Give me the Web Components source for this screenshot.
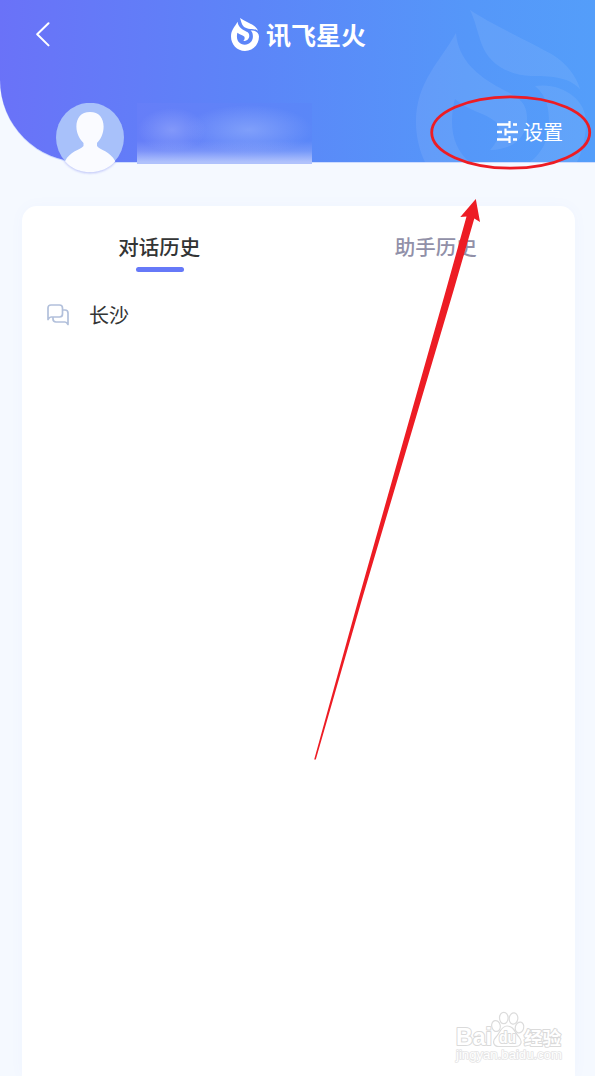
<!DOCTYPE html>
<html lang="zh-CN">
<head>
<meta charset="UTF-8">
<title>讯飞星火</title>
<style>
    html, body {
        margin: 0;
        height: 100%;
    }
    body {
        font-family: "Noto Sans CJK SC", sans-serif;
        background-color: #f5f9ff;
        overflow: hidden;
    }
</style>
</head>
<body>
<spark-app></spark-app>
<script>
class SparkFlame extends HTMLElement {
    connectedCallback() {
        this.attachShadow({ mode: 'open' });
        this.shadowRoot.innerHTML = `
            <style>
                :host {
                    display: block;
                    color: #ffffff;
                }
                svg {
                    display: block;
                    width: 100%;
                    height: 100%;
                }
            </style>
            <svg viewBox="416 10 170 200" preserveAspectRatio="none" fill="currentColor">
                <path d="M470 10C489 23 532 43 553 55C567 64 576 76 580 89C569 78 556 76 532 76C503 75 488 60 482 45C477 31 475 20 470 10Z"/>
                <path d="M456 33C440 62 416 82 416 122C416 170 452 210 501 210C550 210 586 170 586 122C586 98 560 82 535 86C547 96 549 108 549 124C549 150 528 172 500 172C470 172 452 150 452 122C452 112 453 106 455 99C470 112 484 112 496 122C502 130 498 142 490 150C512 150 527 138 527 118C527 100 515 96 500 88C478 76 458 60 456 33Z"/>
            </svg>
        `;
    }
}

class UserAvatar extends HTMLElement {
    connectedCallback() {
        this.attachShadow({ mode: 'open' });
        this.shadowRoot.innerHTML = `
            <style>
                :host {
                    display: block;
                    width: 68px;
                    height: 70px;
                }
                svg {
                    display: block;
                    filter: drop-shadow(0 1px 1px rgba(110, 120, 240, 0.4));
                }
            </style>
            <svg width="68" height="70" viewBox="0 0 68 70">
                <ellipse cx="34" cy="34.5" rx="34" ry="34.7" fill="#a8c1fa"/>
                <path d="M34 9C43 9 47.600 15 47.600 23.500C47.600 31 44.500 36.500 41 40V43C44 47 54 48 59.300 58.300C53 65.500 44 69.200 34 69.200C24 69.200 15 65.500 9 58.300C14 48 24 47 27.500 43V40C24 36.500 20.400 31 20.400 23.500C20.400 15 25 9 34 9Z" fill="#fafbff"/>
            </svg>
        `;
    }
}

class AppHeader extends HTMLElement {
    connectedCallback() {
        this.attachShadow({ mode: 'open' });
        this.shadowRoot.innerHTML = `
            <style>
                :host {
                    display: block;
                    position: relative;
                    height: 162px;
                }
                .backdrop {
                    position: absolute;
                    inset: 0;
                    overflow: hidden;
                    border-bottom-left-radius: 82px;
                    background: linear-gradient(92deg, #6a72f8 0%, #5c85f8 42%, #5597f9 78%, #549efa 100%);
                    box-shadow: 0 1px 0 #cddcff;
                }
                .backdrop spark-flame {
                    position: absolute;
                    left: 416px;
                    top: 10px;
                    width: 170px;
                    height: 200px;
                    opacity: 0.075;
                }
                .content {
                    position: relative;
                    color: #ffffff;
                }
                .bar {
                    display: grid;
                    grid-template-columns: 1fr auto 1fr;
                    align-items: center;
                    height: 69px;
                }
                .back {
                    margin-left: 35px;
                }
                .back svg, .settings svg {
                    display: block;
                }
                .brand {
                    display: flex;
                    align-items: center;
                    gap: 7px;
                    padding-left: 2px;
                    font-size: 25px;
                    font-weight: 700;
                    line-height: 34px;
                }
                .brand spark-flame {
                    width: 28px;
                    height: 33px;
                }
                .brand span {
                    margin-top: -1px;
                }
                .user {
                    display: flex;
                    padding: 34px 32px 0 56px;
                }
                .name {
                    width: 175px;
                    height: 61px;
                    margin-left: 13px;
                    background:
                        linear-gradient(to bottom, rgba(176, 192, 252, 0) 38px, rgba(176, 192, 252, 0.3) 48px, #b0c2fc 59px),
                        radial-gradient(ellipse 34px 22px at 35px 27px, rgba(140, 160, 250, 0.75), rgba(140, 160, 250, 0) 100%),
                        radial-gradient(ellipse 64px 25px at 112px 27px, rgba(138, 168, 251, 0.75), rgba(138, 168, 251, 0) 100%),
                        linear-gradient(to right, #667ef8, #5a87f8);
                }
                .settings {
                    display: flex;
                    align-items: center;
                    gap: 5px;
                    height: 30px;
                    margin: 14px 0 0 auto;
                    font-size: 20px;
                    line-height: 30px;
                }
            </style>
            <div class="backdrop"><spark-flame></spark-flame></div>
            <div class="content">
                <div class="bar">
                    <div class="back">
                        <svg width="16" height="26" viewBox="0 0 16 26" fill="none" stroke="#fff" stroke-width="2" stroke-linecap="round" stroke-linejoin="round"><path d="M13.500 1.200L2.200 12.300L13.500 23.400"/></svg>
                    </div>
                    <div class="brand"><spark-flame></spark-flame><span>讯飞星火</span></div>
                </div>
                <div class="user">
                    <user-avatar></user-avatar>
                    <div class="name"></div>
                    <div class="settings">
                        <svg width="22" height="22" viewBox="0 0 22 22" fill="none" stroke="#fff" stroke-width="2.300">
                            <path d="M1 3.500H14M17 3.500H21M1 11H6M9 11H22M1 18.500H14M17 18.500H21"/>
                            <path stroke-width="2.200" d="M13.500 0V7M9.500 7.500V14.500M13.500 15V22"/>
                        </svg>
                        <span>设置</span>
                    </div>
                </div>
            </div>
        `;
    }
}

class HistoryTab extends HTMLElement {
    connectedCallback() {
        this.attachShadow({ mode: 'open' });
        this.shadowRoot.innerHTML = `
            <style>
                :host {
                    display: flex;
                    flex-direction: column;
                    align-items: center;
                    font-size: 20.5px;
                    line-height: 30px;
                    font-weight: 500;
                    color: #9190a8;
                }
                :host([active]) {
                    color: #333535;
                }
                span {
                    margin-right: 2px;
                }
                .line {
                    width: 48px;
                    height: 5px;
                    margin-top: 6px;
                    border-radius: 3px;
                }
                :host([active]) .line {
                    background-color: #6679f8;
                }
            </style>
            <span><slot></slot></span>
            <div class="line"></div>
        `;
    }
}

class HistoryItem extends HTMLElement {
    connectedCallback() {
        this.attachShadow({ mode: 'open' });
        this.shadowRoot.innerHTML = `
            <style>
                :host {
                    display: flex;
                    align-items: center;
                    gap: 20px;
                    font-size: 20px;
                    line-height: 30px;
                    color: #333535;
                }
            </style>
            <svg width="22" height="22" viewBox="0 0 22 22" fill="none" stroke="#b2c0db" stroke-width="1.700" stroke-linejoin="round">
                <path d="M1 15.500V4Q1 1 4 1H12.500Q15.500 1 15.500 4V10Q15.500 13 12.500 13H4Q2.500 13 1 15.500Z"/>
                <path d="M15.500 6H18Q21 6 21 9V20.500Q19.500 18 18 18H9Q6 18 6 15V13"/>
            </svg>
            <span><slot></slot></span>
        `;
    }
}

class HistoryPanel extends HTMLElement {
    connectedCallback() {
        this.attachShadow({ mode: 'open' });
        this.shadowRoot.innerHTML = `
            <style>
                :host {
                    display: block;
                    flex: 1;
                    margin: 44px 20px 0 22px;
                    background-color: #ffffff;
                    border-radius: 15px 15px 0 0;
                    box-shadow: 0 0 14px rgba(110, 130, 250, 0.04);
                }
                .tabs {
                    display: grid;
                    grid-template-columns: 1fr 1fr;
                    padding-top: 25px;
                }
                .list {
                    padding: 28px 25px 0;
                }
            </style>
            <div class="tabs"><slot name="tab"></slot></div>
            <div class="list"><slot></slot></div>
        `;
    }
}

class SiteMark extends HTMLElement {
    connectedCallback() {
        this.attachShadow({ mode: 'open' });
        this.shadowRoot.innerHTML = `
            <style>
                :host {
                    display: block;
                    width: 110px;
                    height: 54px;
                }
                svg {
                    display: block;
                    overflow: visible;
                }
                text {
                    paint-order: stroke;
                    fill: #ffffff;
                    stroke: #dadada;
                    stroke-width: 2px;
                    stroke-linejoin: round;
                    font-family: "Liberation Sans", "Noto Sans CJK SC", sans-serif;
                    font-weight: 700;
                }
                .small {
                    stroke: #e4e4e4;
                    stroke-width: 1.5px;
                    font-weight: 400;
                }
            </style>
            <svg width="110" height="54" viewBox="0 0 110 54">
                <text x="1" y="34" font-size="23" textLength="36" lengthAdjust="spacingAndGlyphs">Bai</text>
                <g fill="#fff" stroke="#dcdcdc" stroke-width="1.200">
                    <ellipse cx="41" cy="15" rx="4.300" ry="5.500" transform="rotate(-12 41 15)"/>
                    <ellipse cx="48.800" cy="7" rx="4.300" ry="5.700"/>
                    <ellipse cx="58.500" cy="7.500" rx="4.300" ry="5.700" transform="rotate(8 58.500 7.500)"/>
                    <ellipse cx="64.500" cy="16.500" rx="4.200" ry="5.500" transform="rotate(15 64.500 16.500)"/>
                    <path d="M52 15C59 15 60 22 64 26C68 31 66 35.500 60 35.500H44C38 35.500 37 30 41 26C45 22 46 15 52 15Z"/>
                </g>
                <text x="44" y="32" font-size="16" textLength="17" lengthAdjust="spacingAndGlyphs">du</text>
                <text x="69" y="33.500" font-size="18.500" textLength="37">经验</text>
                <text class="small" x="1" y="48" font-size="12" textLength="106" lengthAdjust="spacingAndGlyphs">jingyan.baidu.com</text>
            </svg>
        `;
    }
}

class MarkupLayer extends HTMLElement {
    connectedCallback() {
        this.attachShadow({ mode: 'open' });
        this.shadowRoot.innerHTML = `
            <style>
                :host {
                    display: block;
                    pointer-events: none;
                }
                svg {
                    display: block;
                }
            </style>
            <svg width="595" height="1076" viewBox="0 0 595 1076">
                <ellipse cx="510.700" cy="132.500" rx="79" ry="35.700" fill="none" stroke="#ed1c24" stroke-width="2.800"/>
                <path d="M475.800 199L480 222L474.300 218.500L453.700 290L361.800 600L315.800 759.500H314.200L358.300 600L446 290L466.500 216.500L460.300 217Z" fill="#ed1c24"/>
            </svg>
        `;
    }
}

class SparkApp extends HTMLElement {
    connectedCallback() {
        this.attachShadow({ mode: 'open' });
        this.shadowRoot.innerHTML = `
            <style>
                :host {
                    display: flex;
                    flex-direction: column;
                    position: relative;
                    height: 1076px;
                    overflow: hidden;
                }
                site-mark {
                    position: absolute;
                    left: 455px;
                    top: 1011px;
                }
                markup-layer {
                    position: absolute;
                    inset: 0;
                }
            </style>
            <app-header></app-header>
            <history-panel>
                <history-tab slot="tab" active>对话历史</history-tab>
                <history-tab slot="tab">助手历史</history-tab>
                <history-item>长沙</history-item>
            </history-panel>
            <site-mark></site-mark>
            <markup-layer></markup-layer>
        `;
    }
}

customElements.define('spark-flame', SparkFlame);
customElements.define('user-avatar', UserAvatar);
customElements.define('app-header', AppHeader);
customElements.define('history-tab', HistoryTab);
customElements.define('history-item', HistoryItem);
customElements.define('history-panel', HistoryPanel);
customElements.define('site-mark', SiteMark);
customElements.define('markup-layer', MarkupLayer);
customElements.define('spark-app', SparkApp);
</script>
</body>
</html>
